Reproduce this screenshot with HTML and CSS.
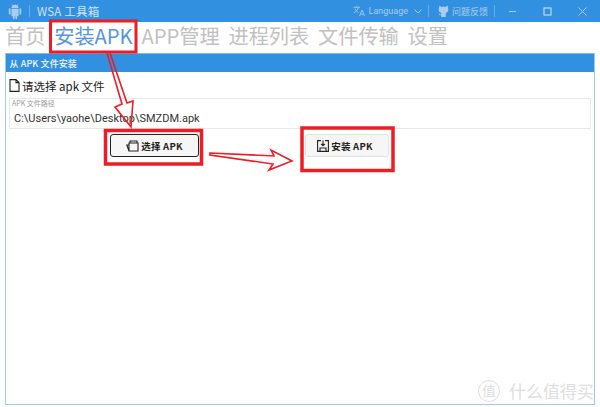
FILE: index.html
```html
<!DOCTYPE html>
<html lang="zh">
<head>
<meta charset="utf-8">
<title>WSA 工具箱</title>
<link rel="stylesheet" href="styles.css">
</head>
<body>
<div class="window">
  <header class="titlebar">
    <svg class="logo" viewBox="0 0 18 20" width="16" height="18"><path fill="#a9cdf0" d="M5 7a4 4 0 0 1 8 0zM2 8a1 1 0 0 1 2 0v5a1 1 0 0 1-2 0zM14 8a1 1 0 0 1 2 0v5a1 1 0 0 1-2 0zM5 7.8h8V15a1 1 0 0 1-1 1h-.6v2.2a1 1 0 0 1-2 0V16H8.600v2.200a1 1 0 0 1-2 0V16H6a1 1 0 0 1-1-1z"/><path stroke="#a9cdf0" stroke-width=".7" d="M6.500 4 5.500 2M11.500 4l1-2"/></svg>
    <span class="sep"></span>
    <span class="app-title">WSA 工具箱</span>
    <span class="spring"></span>
    <svg class="tb-icon" viewBox="0 0 14 12" width="13" height="12"><path fill="none" stroke="#a9cdf0" stroke-width=".9" d="M.5 2h7M4 .5V2M6 2C5 5 3 7 .7 8M2 3.500c1 2 2.500 3.500 4 4.200M7 11.500 9.700 5l2.800 6.500M8 9.500h3.500"/></svg>
    <span class="tb-text lang">Language</span>
    <svg class="chev" viewBox="0 0 8 5" width="8" height="5"><path fill="none" stroke="#a9cdf0" d="M.5.500 4 4 7.500.5"/></svg>
    <span class="sep sep-a"></span>
    <svg class="cat" viewBox="0 0 12 14" width="11" height="14"><path fill="#a9cdf0" d="M1.500 1 3.800 2.600a6 6 0 0 1 4.400 0L10.500 1l.4 3a4 4 0 0 1-2.400 5.200V13.500h-5V11.500H2.500A1.500 1.500 0 0 1 1 10h1a.8.8 0 0 0 .8.700h.7V9.200A4 4 0 0 1 1.100 4z"/></svg>
    <span class="tb-text feedback">问题反馈</span>
    <span class="sep sep-b"></span>
    <div class="win-btns">
      <svg viewBox="0 0 9 9" width="9" height="9"><path stroke="#a9cdf0" d="M1 4.500h7"/></svg>
      <svg viewBox="0 0 9 9" width="9" height="9"><rect x="1" y="1" width="7" height="7" fill="none" stroke="#d3e6f8"/></svg>
      <svg viewBox="0 0 9 9" width="9" height="9"><path stroke="#a9cdf0" d="m.5.500 8 8M8.500.5l-8 8"/></svg>
    </div>
  </header>

  <nav class="tabs">
    <span class="tab">首页</span>
    <span class="tab active">安装APK</span>
    <span class="tab">APP管理</span>
    <span class="tab">进程列表</span>
    <span class="tab">文件传输</span>
    <span class="tab">设置</span>
  </nav>

  <section class="panel">
    <h2 class="panel-head">从 APK 文件安装</h2>
    <div class="panel-body">
      <div class="file-label">
        <svg viewBox="0 0 11 13" width="11" height="13"><path fill="none" stroke="#222" stroke-width="1.100" d="M1 .6h6l3 3V12.400H1zM7 .6v3h3"/></svg>
        <span>请选择 apk 文件</span>
      </div>
      <div class="path-box">
        <span class="path-caption">APK 文件路径</span>
        <span class="path-value">C:\Users\yaohe\Desktop\SMZDM.apk</span>
      </div>
      <div class="actions">
        <button class="btn btn-select" type="button">
          <svg viewBox="0 0 13 12" width="13" height="12"><path fill="none" stroke="#222" stroke-width="1.100" d="M4 3V1h7v2M3 3h9v8H3zM3 11 .8 5H3"/></svg>
          <span>选择 APK</span>
        </button>
        <button class="btn btn-install" type="button">
          <svg viewBox="0 0 12 12" width="12" height="12"><path fill="none" stroke="#222" stroke-width="1.100" d="M4 .6H.6v10.800h10.800V.6H8M6 .6v5M4 3.800l2 2 2-2M3 11.400V8h6v3.400"/></svg>
          <span>安装 APK</span>
        </button>
      </div>
    </div>
  </section>
</div>

<svg class="annotations" viewBox="0 0 600 407" width="600" height="407">
  <g fill="none" stroke="#ee1c25">
    <rect x="50.500" y="21" width="85.500" height="31" stroke-width="3"/>
    <rect x="105.500" y="130.500" width="96" height="33.500" stroke-width="3.500"/>
    <rect x="302" y="128" width="91" height="42.500" stroke-width="3.500"/>
    <path stroke-width="1.600" d="M107 53 122 104 115 107 131 127 133 101 127 103 110 53M210 153 274 156 271 150 292 161 269 170 273 164 210 155Z"/>
  </g>
</svg>

<div class="watermark">
  <span class="wm-badge">值</span>
  <span class="wm-text">什么值得买</span>
</div>
</body>
</html>
```

FILE: styles.css
```css
* { box-sizing: border-box; }
html, body { margin: 0; padding: 0; }
body {
  width: 600px;
  height: 407px;
  overflow: hidden;
  background: #fff;
  font-family: "Noto Sans CJK SC", "Noto Sans", sans-serif;
  position: relative;
}
.window {
  height: 407px;
  display: flex;
  flex-direction: column;
  background: #fff;
}
.titlebar {
  height: 22px;
  flex: none;
  background: #3290e0;
  display: flex;
  align-items: center;
  padding-left: 7px;
  color: #a9cdf0;
}
.logo { margin-right: 6px; }
.sep { width: 1px; height: 12px; background: #6aaee8; }
.app-title {
  margin-left: 7px;
  font-size: 11.500px;
  color: #cfe3f7;
  letter-spacing: 0.2px;
}
.spring { flex: 1; }
.tb-icon { margin-right: 3px; }
.tb-text { font-size: 9px; color: #a9cdf0; }
.lang { font-family: "Roboto", sans-serif; margin-right: 6px; }
.chev { margin-right: 6px; }
.sep-a { margin-right: 9px; }
.cat { margin-right: 3px; }
.feedback { margin-right: 6px; }
.sep-b { margin-right: 13px; }
.win-btns {
  display: flex;
  gap: 26px;
  align-items: center;
  margin-right: 13px;
}
.win-btns svg { display: block; }
.tabs {
  height: 31px;
  flex: none;
  display: flex;
  align-items: center;
  gap: 8.800px;
  padding: 0 0 3px 5px;
}
.tab {
  font-size: 20.200px;
  line-height: 28px;
  color: #c2c1c1;
  white-space: nowrap;
  font-family: "Noto Sans CJK SC", sans-serif;
}
.active { color: #5596de; }
.panel {
  flex: 1;
  margin: 0 5px 2px;
  border: 1px solid #9ccaf0;
  border-top: 0;
  display: flex;
  flex-direction: column;
}
.panel-head {
  height: 19px;
  margin: 0;
  padding-left: 3.500px;
  background: #3290e0;
  color: #f2f7fd;
  font-size: 9px;
  font-weight: 500;
  letter-spacing: 0.1px;
  line-height: 19px;
  border-top: 1px solid #7cbaf0;
}
.panel-body {
  flex: 1;
  padding: 6px 0 0 3px;
}
.file-label {
  display: flex;
  align-items: center;
  gap: 2px;
  height: 15px;
  font-size: 11.5px;
  color: #222;
}
.path-box {
  margin: 5px 3px 0 0;
  height: 31px;
  border: 1px solid #e8e8e8;
  padding: 0 0 0 2px;
  display: flex;
  flex-direction: column;
}
.path-caption {
  font-size: 7px;
  line-height: 9px;
  color: #9a9a9a;
}
.path-value {
  margin-top: 3px;
  font-family: "Roboto", "Noto Sans", sans-serif;
  font-size: 11px;
  line-height: 16px;
  color: #333;
  padding-left: 2px;
}
.actions {
  display: flex;
  align-items: flex-start;
  margin-top: 5px;
  padding-left: 101px;
}
.btn {
  display: flex;
  align-items: center;
  justify-content: center;
  gap: 2px;
  height: 23px;
  padding: 0;
  background: #f6f6f6;
  border: 1px solid #e2e2e2;
  border-radius: 3px;
  font: 700 9.5px "Noto Sans CJK SC", sans-serif;
  letter-spacing: 0.2px;
  color: #222;
}
.btn-select {
  width: 89px;
  border: 1.500px solid #222;
}
.btn-install {
  width: 84px;
  margin-left: 106px;
  padding-right: 4px;
}
.annotations {
  position: absolute;
  left: 0;
  top: 0;
  pointer-events: none;
}
.watermark {
  position: absolute;
  right: 6px;
  bottom: 5px;
  display: flex;
  align-items: center;
  gap: 9px;
  color: #dedede;
}
.wm-badge {
  width: 22px;
  height: 22px;
  border: 1.500px solid #dedede;
  border-radius: 50%;
  font-size: 14px;
  line-height: 18px;
  text-align: center;
}
.wm-text { font-size: 17px; line-height: 22px; white-space: nowrap; }
```
